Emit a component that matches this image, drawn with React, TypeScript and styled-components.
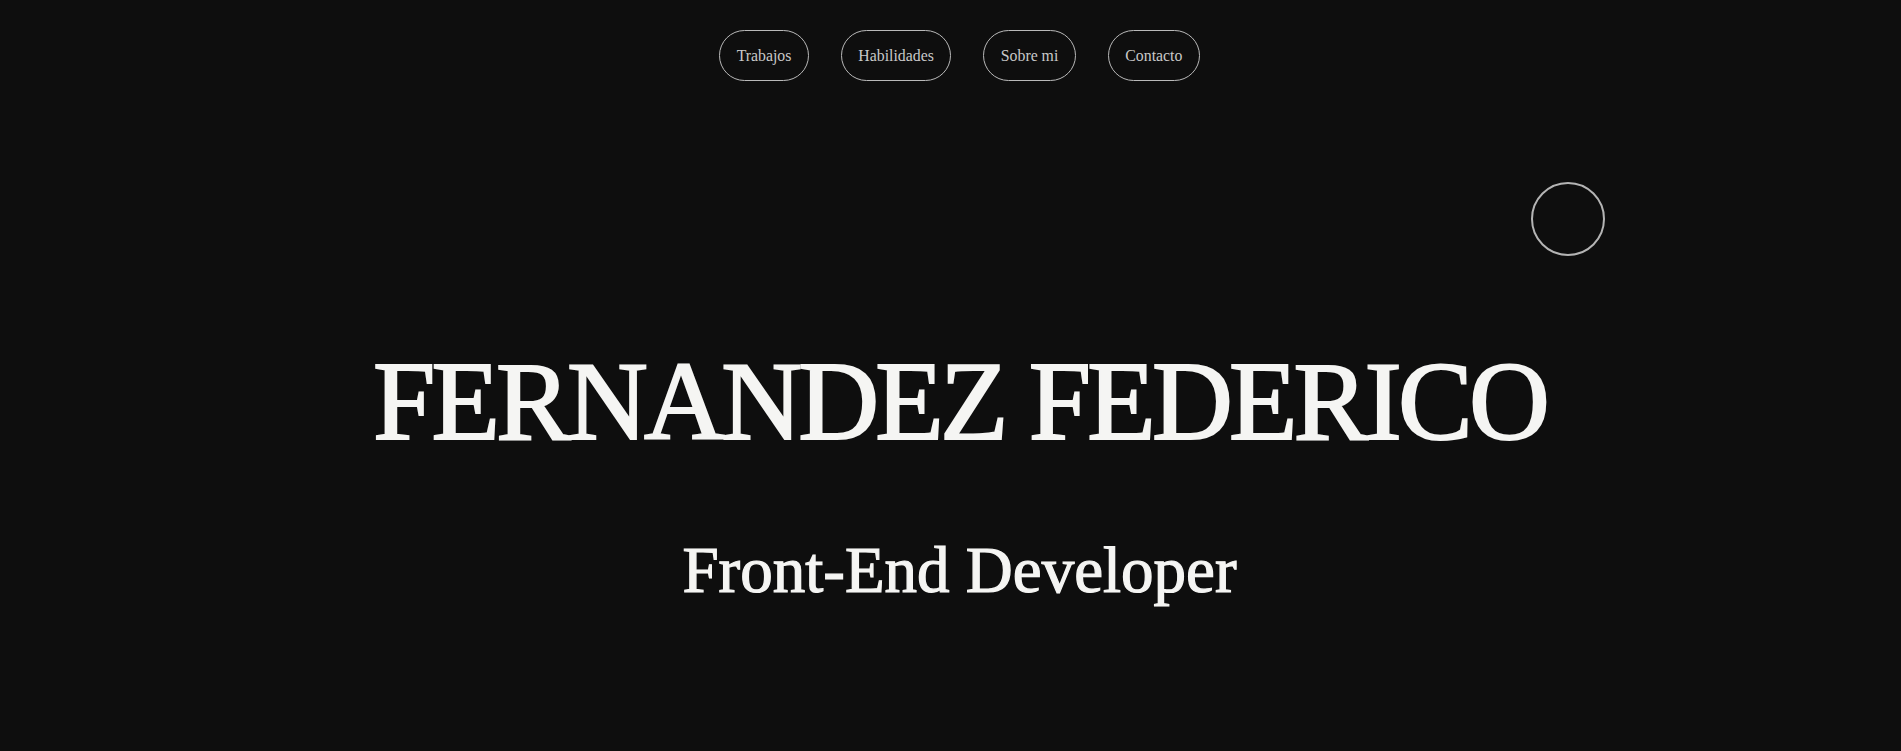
import React from "react";
import styled, { createGlobalStyle } from "styled-components";

const GlobalStyle = createGlobalStyle`
  html, body {
    margin: 0;
    padding: 0;
    background: #0e0e0e;
  }
  body {
    font-family: "Liberation Serif", "Times New Roman", serif;
    overflow: hidden;
  }
`;

const Page = styled.div`
  position: relative;
  min-height: 100vh;
  box-sizing: border-box;
  padding-left: 18px;
  background: #0e0e0e;
  display: flex;
  flex-direction: column;
  align-items: center;
`;

const Nav = styled.nav`
  display: flex;
  justify-content: center;
  gap: 32px;
  padding-top: 30px;
`;

const NavButton = styled.a`
  display: inline-flex;
  align-items: center;
  justify-content: center;
  box-sizing: border-box;
  height: 51px;
  padding: 0 16.5px;
  border: 1px solid #b9b9b9;
  border-radius: 26px;
  color: #c9c9c9;
  font-family: "Liberation Serif", "Times New Roman", serif;
  font-size: 15.8px;
  text-decoration: none;
  cursor: pointer;
`;

const Hero = styled.header`
  display: flex;
  flex-direction: column;
  align-items: center;
`;

const Title = styled.h1`
  margin: 264px 0 0;
  font-family: "Liberation Serif", "Times New Roman", serif;
  font-weight: 400;
  font-size: 112px;
  line-height: 1;
  letter-spacing: -3.8px;
  color: #f5f5f3;
  -webkit-text-stroke: 2px #f5f5f3;
  white-space: nowrap;
`;

const Subtitle = styled.h2`
  margin: 81px 0 0;
  font-family: "Liberation Serif", "Times New Roman", serif;
  font-weight: 400;
  font-size: 65px;
  line-height: 1;
  letter-spacing: 0;
  color: #f5f5f3;
  -webkit-text-stroke: 1.2px #f5f5f3;
  white-space: nowrap;
`;

const CursorRing = styled.div`
  position: absolute;
  left: 1531px;
  top: 182px;
  width: 74px;
  height: 74px;
  box-sizing: border-box;
  border: 2px solid #b4b4b4;
  border-radius: 50%;
  pointer-events: none;
`;

const links = ["Trabajos", "Habilidades", "Sobre mi", "Contacto"];

export default function App() {
  return (
    <>
      <GlobalStyle />
      <Page>
        <Nav>
          {links.map((l) => (
            <NavButton key={l}>{l}</NavButton>
          ))}
        </Nav>
        <Hero>
          <Title>FERNANDEZ FEDERICO</Title>
          <Subtitle>Front-End Developer</Subtitle>
        </Hero>
        <CursorRing />
      </Page>
    </>
  );
}
